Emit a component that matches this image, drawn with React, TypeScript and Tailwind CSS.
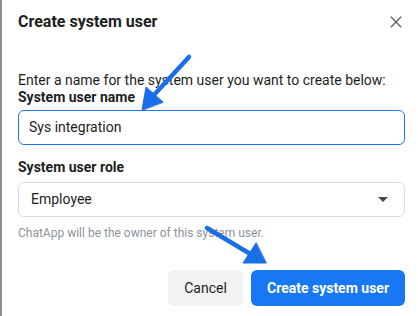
export default function App() {
  return (
    <div className="relative w-[418px] h-[316px] bg-white overflow-hidden font-['Roboto',sans-serif] text-[#1c1e21]">
      <div className="absolute left-0 top-0 h-full w-[2px] bg-[#8a8d91]" />
      <div className="pl-[18px] pr-[13px]">
        {/* Header */}
        <div className="flex items-center justify-between h-[44px]">
          <h1 className="text-[16px] font-bold leading-none">Create system user</h1>
          <button className="w-[12px] h-[12px] flex items-center justify-center text-[#606770] mr-[3px]">
            <svg width="12" height="12" viewBox="0 0 14 14" fill="none" stroke="currentColor" strokeWidth="1.7">
              <path d="M1 1L13 13M13 1L1 13" />
            </svg>
          </button>
        </div>

        {/* Body */}
        <p className="mt-[28px] text-[14px] leading-[16px]">
          Enter a name for the system user you want to create below:
        </p>
        <div className="mt-[1px] text-[14px] font-bold leading-[16px]">System user name</div>
        <div className="mt-[5px] h-[35px] rounded-[6px] border border-[#1877f2] flex items-center pl-[10px] text-[14px]">
          Sys integration
        </div>

        <div className="mt-[14px] text-[14px] font-bold leading-[16px]">System user role</div>
        <div className="mt-[7px] h-[35px] rounded-[6px] border border-[#dadde1] flex items-center justify-between pl-[12px] pr-[16px] text-[14px]">
          <span>Employee</span>
          <svg width="10" height="5" viewBox="0 0 10 5" className="text-[#444950]">
            <path d="M0 0H10L5 5Z" fill="currentColor" />
          </svg>
        </div>
        <p className="mt-[8px] text-[12px] leading-[16px] text-[#8d949e]">
          ChatApp will be the owner of this system user.
        </p>

        {/* Footer */}
        <div className="mt-[29px] flex justify-end gap-[8px]">
          <button className="h-[36px] w-[75px] rounded-[6px] bg-[#f2f2f2] text-[14px] text-[#1c1e21]">Cancel</button>
          <button className="h-[36px] w-[154px] rounded-[6px] bg-[#1877f2] text-[14px] font-bold text-white">
            Create system user
          </button>
        </div>
      </div>

      {/* Annotation arrows */}
      <svg className="absolute left-0 top-0 pointer-events-none" width="418" height="316">
        <g fill="#1a6fe8" stroke="#1a6fe8" strokeLinecap="round">
          <line x1="189" y1="57" x2="153" y2="96" strokeWidth="4.5" />
          <path d="M142 110 L146 87 L163 102 Z" strokeWidth="1" strokeLinejoin="round" />
          <line x1="207" y1="228" x2="252" y2="255" strokeWidth="4.5" />
          <path d="M266 263 L243 263 L256 243 Z" strokeWidth="1" strokeLinejoin="round" />
        </g>
      </svg>
    </div>
  )
}
